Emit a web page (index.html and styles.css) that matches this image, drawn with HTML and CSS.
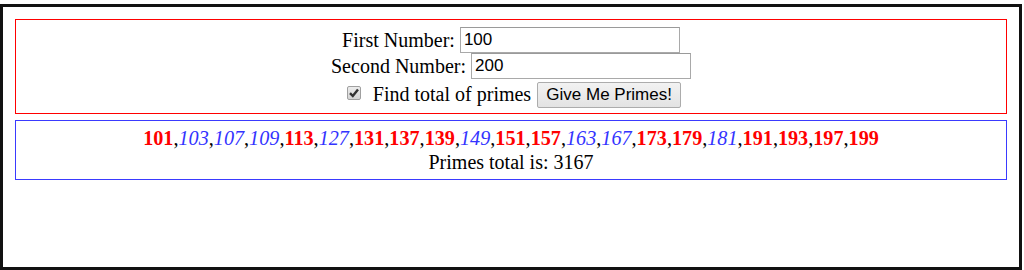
FILE: index.html
```html
<!DOCTYPE html>
<html>
<head>
<meta charset="utf-8">
<link rel="stylesheet" href="styles.css">
</head>
<body>
<div class="frame">
  <div class="form-box">
    <div class="row">
      <label class="lbl">First Number:</label>
      <span class="input">100</span>
    </div>
    <div class="row">
      <label class="lbl">Second Number:</label>
      <span class="input">200</span>
    </div>
    <div class="row row-last">
      <span class="check"><svg width="12" height="12" viewBox="0 0 12 12"><path d="M2 6.2 L4.8 9 L10 2.4" fill="none" stroke="#333" stroke-width="2.4"/></svg></span>
      <span class="lbl find">Find total of primes</span>
      <span class="btn">Give Me Primes!</span>
    </div>
  </div>
  <div class="result-box">
    <div class="primes"><b>101</b>,<i>103</i>,<i>107</i>,<i>109</i>,<b>113</b>,<i>127</i>,<b>131</b>,<b>137</b>,<b>139</b>,<i>149</i>,<b>151</b>,<b>157</b>,<i>163</i>,<i>167</i>,<b>173</b>,<b>179</b>,<i>181</i>,<b>191</b>,<b>193</b>,<b>197</b>,<b>199</b></div>
    <div class="total">Primes total is: 3167</div>
  </div>
</div>
</body>
</html>
```
FILE: styles.css
```css
html, body {
  margin: 0;
  padding: 0;
  background: #fff;
}
body {
  font-family: "Liberation Serif", "Times New Roman", serif;
  font-size: 20px;
  color: #000;
}
.frame {
  box-sizing: border-box;
  margin-top: 4px;
  width: 1022px;
  height: 266px;
  border: 3px solid #111;
  padding: 12px 12px 0 12px;
}
.form-box {
  border: 1px solid #f00;
  padding: 7px 0 0 0;
  box-sizing: content-box;
  height: 86px;
}
.row {
  display: flex;
  justify-content: center;
  align-items: center;
  height: 26px;
}
.row-last {
  margin-top: 2px;
  height: 27px;
  padding-left: 6px;
}
.lbl {
  margin-right: 5px;
}
.input {
  box-sizing: border-box;
  width: 220px;
  height: 26px;
  border: 1px solid #a9a9a9;
  border-top-color: #9a9a9a;
  font-family: "Liberation Sans", Arial, sans-serif;
  font-size: 17px;
  line-height: 24px;
  padding: 0 3px;
  text-align: left;
}
.check {
  box-sizing: border-box;
  width: 14px;
  height: 14px;
  border: 1px solid #a0a0a0;
  border-radius: 2px;
  background: linear-gradient(#ececec, #d4d4d4);
  display: flex;
  align-items: center;
  justify-content: center;
  margin-right: 12px;
  margin-top: -3px;
}
.check svg {
  display: block;
}
.find {
  margin-right: 6px;
}
.btn {
  box-sizing: border-box;
  width: 144px;
  height: 26px;
  border: 1px solid #acacac;
  border-radius: 2px;
  background: linear-gradient(#f2f2f2, #e3e3e3);
  font-family: "Liberation Sans", Arial, sans-serif;
  font-size: 17px;
  line-height: 24px;
  text-align: center;
}
.result-box {
  margin-top: 6px;
  border: 1px solid #3a3aff;
  padding: 5px 0;
  text-align: center;
  line-height: 24px;
}
.primes {
  font-size: 20.2px;
}
.primes b {
  color: #f00;
  font-weight: bold;
}
.primes i {
  color: #3333ff;
  font-style: italic;
}
```
